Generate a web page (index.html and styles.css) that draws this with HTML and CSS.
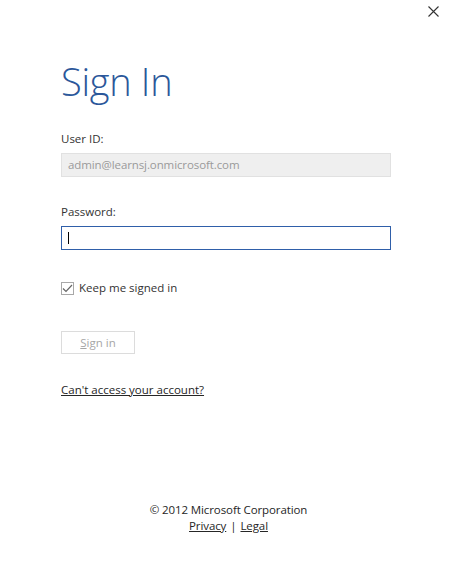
FILE: index.html
```html
<!DOCTYPE html>
<html>
<head>
<meta charset="utf-8">
<link rel="stylesheet" href="styles.css">
</head>
<body>
<div class="window">
  <button class="close" aria-label="Close">
    <svg width="11" height="11" viewBox="0 0 11 11"><path d="M0.5 0.5 L10.5 10.5 M10.5 0.5 L0.5 10.5" stroke="#333" stroke-width="1.1" fill="none"/></svg>
  </button>
  <main class="content">
    <h1 class="title">Sign In</h1>
    <div class="field">
      <label class="label">User ID:</label>
      <div class="input input-disabled">admin@learnsj.onmicrosoft.com</div>
    </div>
    <div class="field field-pw">
      <label class="label">Password:</label>
      <div class="input input-focus"><span class="caret"></span></div>
    </div>
    <label class="check-row">
      <span class="checkbox">
        <svg width="11" height="9" viewBox="0 0 11 9"><path d="M1 4.5 L4 7.5 L10 1" stroke="#666" stroke-width="1.2" fill="none"/></svg>
      </span>
      <span>Keep me signed in</span>
    </label>
    <div class="button"><span class="u">S</span>ign in</div>
    <a class="link" href="#">Can't access your account?</a>
  </main>
  <footer class="footer">
    <div>© 2012 Microsoft Corporation</div>
    <div class="footer-links"><a href="#">Privacy</a><span class="sep">|</span><a href="#">Legal</a></div>
  </footer>
</div>
</body>
</html>
```
FILE: styles.css
```css
html, body {
  margin: 0;
  padding: 0;
  background: #fff;
}
body {
  font-family: "Open Sans", "Noto Sans", sans-serif;
  font-size: 11.5px;
  color: #262626;
}
.window {
  width: 457px;
  height: 563px;
  position: relative;
  display: flex;
  flex-direction: column;
}
.close {
  position: absolute;
  top: 6px;
  left: 428px;
  width: 11px;
  height: 11px;
  padding: 0;
  border: 0;
  background: none;
  display: flex;
}
.content {
  padding: 56px 0 0 61px;
  display: flex;
  flex-direction: column;
  align-items: flex-start;
}
.title {
  margin: 0;
  font-weight: 300;
  font-size: 38px;
  line-height: 50px;
  color: #2b579a;
  letter-spacing: -0.3px;
}
.field {
  display: flex;
  flex-direction: column;
  margin-top: 25px;
}
.field-pw {
  margin-top: 27px;
}
.label {
  line-height: 16px;
  margin-bottom: 6px;
  color: #333;
}
.input {
  box-sizing: border-box;
  width: 330px;
  height: 24px;
  padding: 0 6px;
  line-height: 22px;
  display: flex;
  align-items: center;
}
.input-disabled {
  background: #efefef;
  border: 1px solid #e1e1e1;
  color: #9a9a9a;
  letter-spacing: -0.1px;
}
.input-focus {
  border: 1px solid #2f5fa9;
  padding-left: 6px;
}
.caret {
  width: 1px;
  height: 12px;
  background: #000;
}
.check-row {
  margin-top: 30px;
  display: flex;
  align-items: center;
  gap: 5px;
  color: #333;
  line-height: 16px;
}
.checkbox {
  box-sizing: border-box;
  width: 13px;
  height: 13px;
  border: 1px solid #a8a8a8;
  display: flex;
  align-items: center;
  justify-content: center;
}
.button {
  margin-top: 35px;
  box-sizing: border-box;
  width: 74px;
  height: 23px;
  border: 1px solid #dcdcdc;
  display: flex;
  align-items: center;
  justify-content: center;
  color: #a6a6a6;
}
.u {
  text-decoration: underline;
}
.link {
  margin-top: 28px;
  color: #262626;
  text-decoration: underline;
  line-height: 16px;
}
.footer {
  margin-top: auto;
  margin-bottom: 29px;
  text-align: center;
  line-height: 16px;
  color: #262626;
  letter-spacing: -0.1px;
}
.footer-links {
  display: flex;
  justify-content: center;
  gap: 4px;
}
.footer-links a {
  color: #262626;
  text-decoration: underline;
}
```
